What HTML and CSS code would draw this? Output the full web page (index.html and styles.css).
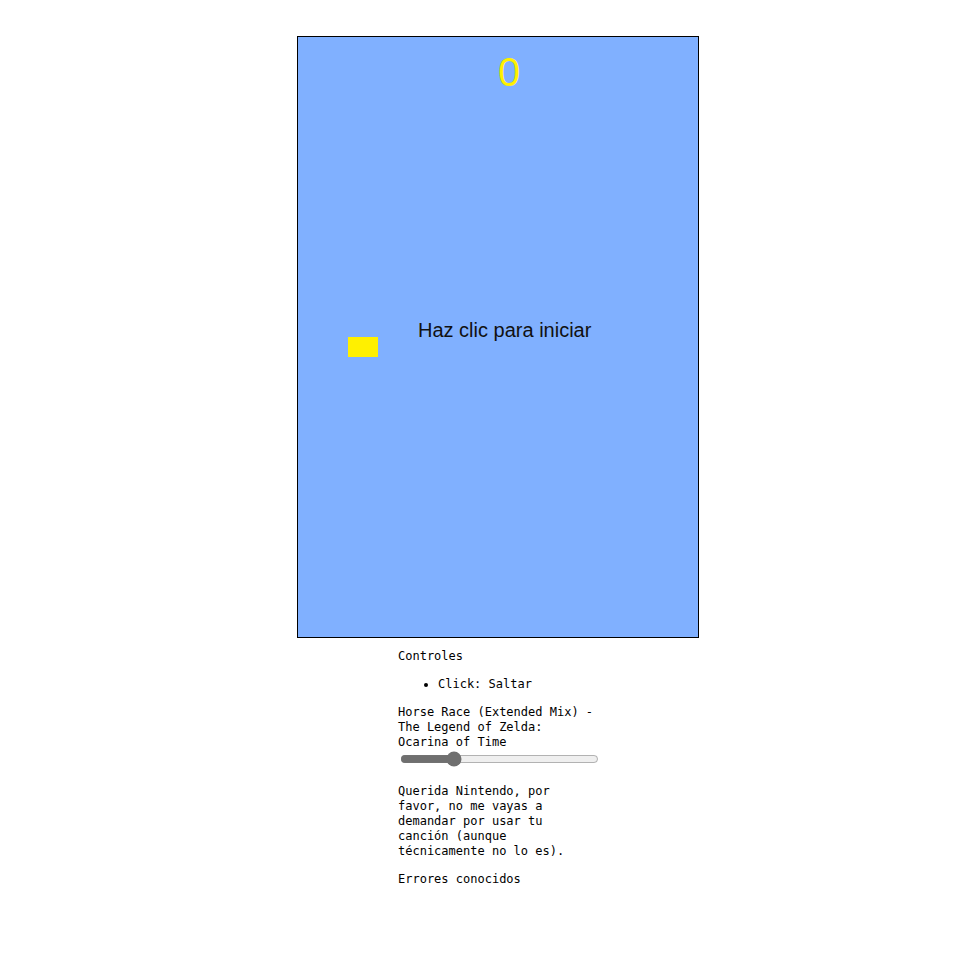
FILE: index.html
```html
<!DOCTYPE html>
<html lang="es">
<head>
<meta charset="utf-8">
<title>Juego</title>
<link rel="stylesheet" href="styles.css">
</head>
<body>
<div class="page">
  <div class="game">
    <span class="score">0</span>
    <div class="player"></div>
    <span class="prompt">Haz clic para iniciar</span>
  </div>
  <div class="info">
    <p class="first">Controles</p>
    <ul>
      <li>Click: Saltar</li>
    </ul>
    <p>Horse Race (Extended Mix) - The Legend of Zelda: Ocarina of Time<br><input class="volume" type="range" min="0" max="100" value="25"></p>
    <p>Querida Nintendo, por favor, no me vayas a demandar por usar tu canción (aunque técnicamente no lo es).</p>
    <p>Errores conocidos</p>
  </div>
</div>
</body>
</html>
```

FILE: styles.css
```css
html, body {
  margin: 0;
  padding: 0;
  background: #ffffff;
}

.page {
  display: flex;
  flex-direction: column;
  align-items: center;
  width: 402px;
  padding: 36px 0 0 297px;
}

.game {
  position: relative;
  width: 400px;
  height: 600px;
  border: 1px solid #000;
  background: #80b0ff;
  font-family: "Liberation Sans", Arial, sans-serif;
}

.score {
  position: absolute;
  left: 200px;
  top: 15px;
  font-size: 40px;
  line-height: 1;
  color: #fff000;
}

.player {
  position: absolute;
  left: 50px;
  top: 300px;
  width: 30px;
  height: 20px;
  background: #fff000;
}

.prompt {
  position: absolute;
  left: 120px;
  top: 283px;
  font-size: 20px;
  line-height: 1;
  color: #111;
  white-space: nowrap;
}

.info {
  width: 200px;
  font-family: "DejaVu Sans Mono", "Liberation Mono", monospace;
  font-size: 12px;
  line-height: 15px;
  color: #000;
}

.info p {
  margin: 13px 0;
}

.info p.first {
  margin-top: 11px;
}

.info ul {
  margin: 13px 0;
  padding-left: 40px;
}

.volume {
  width: 199px;
  margin: 1px 0 4px 2px;
  accent-color: #6f6f6f;
}
```
